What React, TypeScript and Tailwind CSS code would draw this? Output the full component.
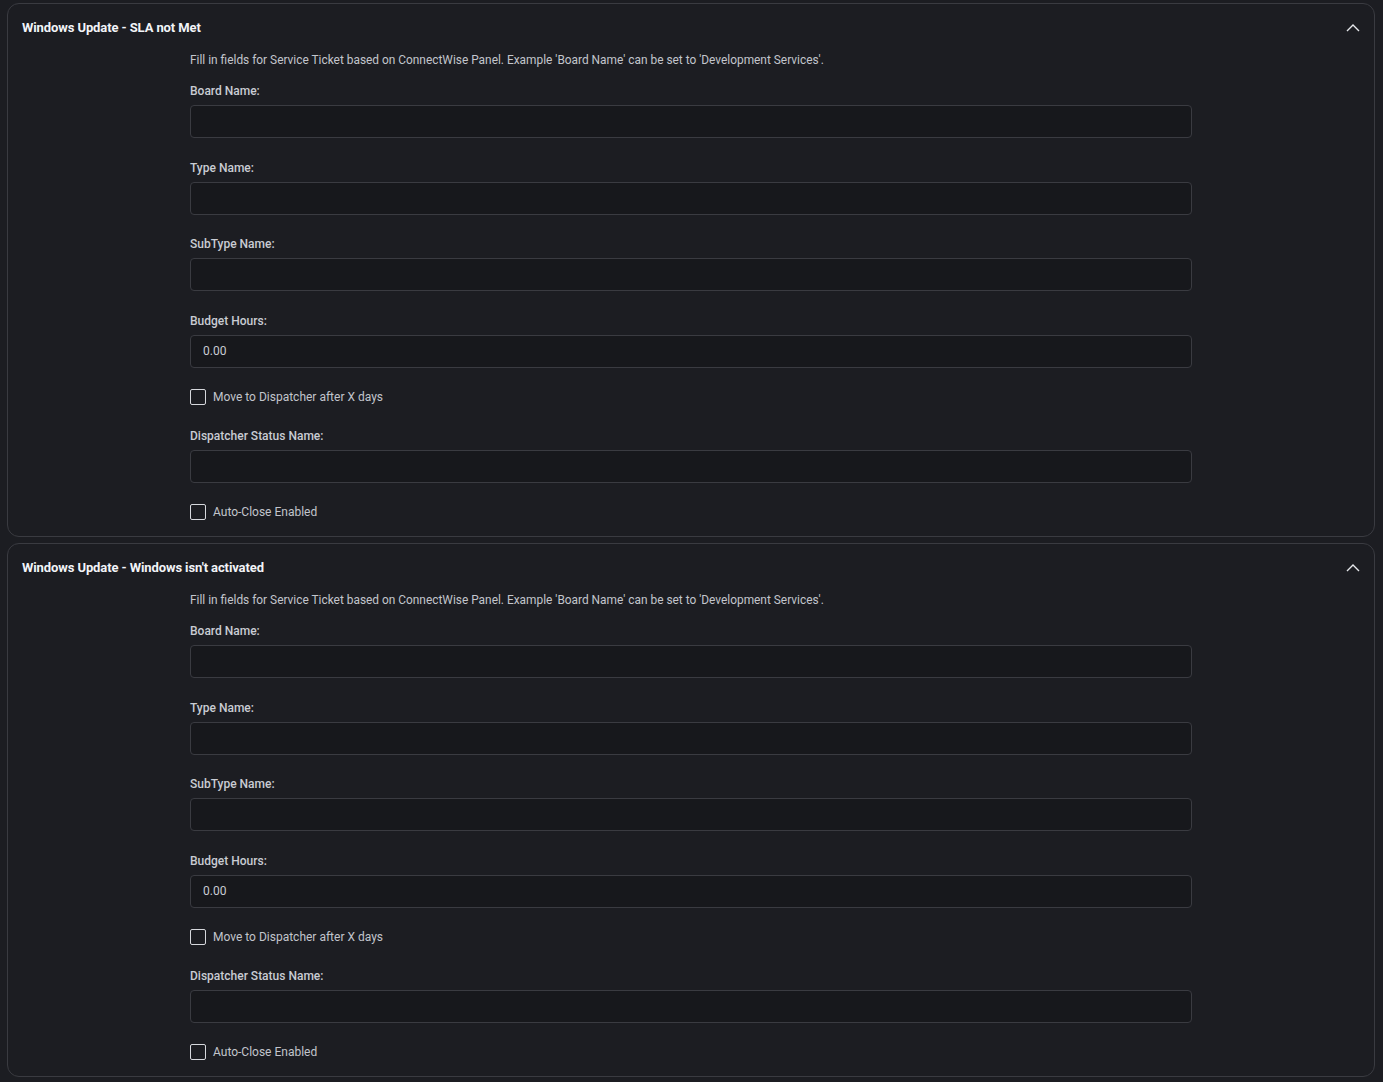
import React from "react";

const font = { fontFamily: "Roboto, 'Liberation Sans', sans-serif" };

function Field({ label, value }: { label: string; value?: string }) {
  return (
    <div className="flex flex-col">
      <div className="text-[12px] leading-[18px] font-medium text-[#c9ccd3] mb-[5px]">{label}</div>
      <div className="h-[33px] w-[1002px] rounded-[4px] border border-[#3a3b41] bg-[#17181c] flex items-center px-3 text-[12px] text-[#c9ccd3]">
        {value}
      </div>
    </div>
  );
}

function Check({ label }: { label: string }) {
  return (
    <div className="flex items-center h-[17.5px] gap-[7px]">
      <div className="w-[16px] h-[16px] shrink-0 rounded-[2px] border-[1.5px] border-[#d6d8dd]" />
      <span className="text-[12px] text-[#c2c5cc]">{label}</span>
    </div>
  );
}

function Card({ title }: { title: string }) {
  return (
    <div className="rounded-[12px] border border-[#3a3b41] bg-[#1c1d22] px-[14px] pt-[15px] pb-[15px]">
      <div className="flex items-center justify-between h-[18px]">
        <div className="text-[13px] font-bold text-[#f2f4f8] tracking-[-0.1px]">{title}</div>
        <svg width="14" height="8" viewBox="0 0 14 8">
          <path d="M1 7 L7 1 L13 7" fill="none" stroke="#e6e8ec" strokeWidth="1.4" />
        </svg>
      </div>
      <div className="pl-[168px] mt-[14px] flex flex-col">
        <div className="text-[11.9px] leading-[18px] text-[#c2c5cc] mb-[13px]">
          Fill in fields for Service Ticket based on ConnectWise Panel. Example 'Board Name' can be set to 'Development Services'.
        </div>
        <div className="flex flex-col gap-[20.67px]">
          <Field label="Board Name:" />
          <Field label="Type Name:" />
          <Field label="SubType Name:" />
          <Field label="Budget Hours:" value="0.00" />
          <Check label="Move to Dispatcher after X days" />
          <Field label="Dispatcher Status Name:" />
          <Check label="Auto-Close Enabled" />
        </div>
      </div>
    </div>
  );
}

export default function App() {
  return (
    <div className="min-h-[1082px] w-full bg-[#1c1d22] pt-[3px] pl-[7px] pr-[8px] flex flex-col gap-[6px]" style={font}>
      <Card title="Windows Update - SLA not Met" />
      <Card title="Windows Update - Windows isn't activated" />
    </div>
  );
}
